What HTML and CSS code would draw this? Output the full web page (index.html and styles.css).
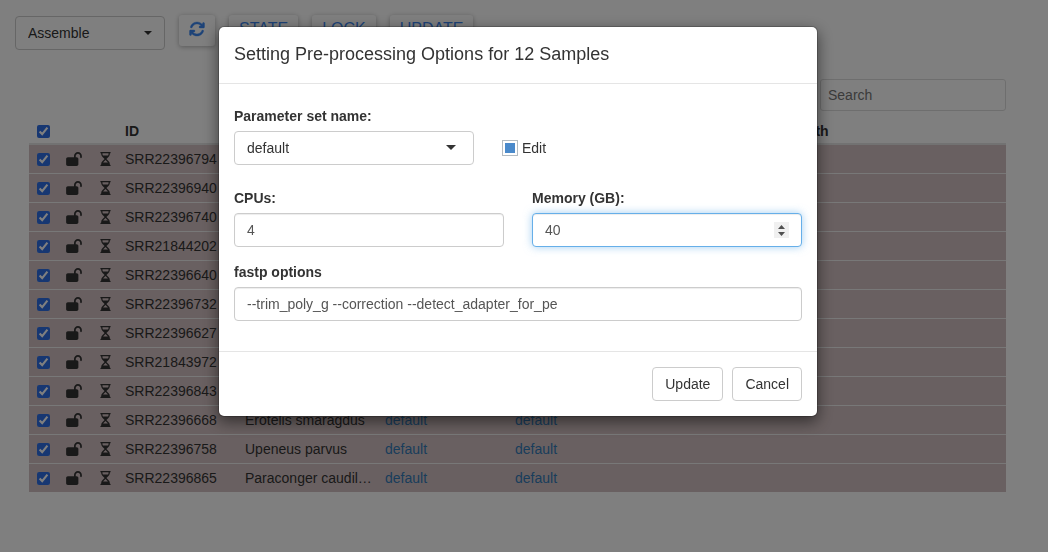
FILE: index.html
```html
<!DOCTYPE html>
<html lang="en">
<head>
<meta charset="utf-8">
<title>Assemble</title>
<link rel="stylesheet" href="styles.css">
</head>
<body>
<svg class="sprite" aria-hidden="true">
  <symbol id="refresh" viewBox="0 0 512 512"><path d="M105.1 202.6c7.7-21.8 20.2-42.3 37.8-59.8c62.5-62.5 163.8-62.5 226.3 0L386.3 160H352c-17.7 0-32 14.3-32 32s14.3 32 32 32H463.9c17.7 0 32-14.3 32-32V80c0-17.7-14.3-32-32-32s-32 14.3-32 32v35.200L414.4 97.6c-87.5-87.5-229.3-87.5-316.8 0C73.2 122 55.6 150.7 44.8 181.4c-5.9 16.7 2.9 34.9 19.5 40.8s34.9-2.9 40.8-19.5zM39 289.3c-5 1.5-9.8 4.2-13.7 8.2c-4 4-6.7 8.8-8.1 14c-.3 1.2-.6 2.5-.8 3.8c-.3 1.7-.4 3.4-.4 5.1V432c0 17.7 14.3 32 32 32s32-14.3 32-32V396.900l17.6 17.5c87.5 87.4 229.3 87.4 316.7 0c24.4-24.4 42.1-53.1 52.9-83.7c5.9-16.7-2.9-34.9-19.5-40.8s-34.9 2.9-40.8 19.5c-7.7 21.8-20.2 42.3-37.8 59.8c-62.5 62.5-163.8 62.5-226.3 0l-.1-.1L125.6 352H160c17.7 0 32-14.3 32-32s-14.3-32-32-32H48.4c-1.6 0-3.2 .1-4.8 .3s-3.1 .5-4.6 1z"/></symbol>
  <symbol id="unlock" viewBox="0 0 576 512"><path d="M352 144c0-44.2 35.8-80 80-80s80 35.8 80 80v48c0 17.7 14.3 32 32 32s32-14.3 32-32V144C576 64.5 511.5 0 432 0S288 64.5 288 144v48H64c-35.3 0-64 28.7-64 64V448c0 35.3 28.7 64 64 64H384c35.3 0 64-28.7 64-64V256c0-35.3-28.7-64-64-64H352V144z"/></symbol>
  <symbol id="hourglass" viewBox="0 0 384 512"><path d="M0 24C0 10.7 10.7 0 24 0H360c13.3 0 24 10.7 24 24s-10.7 24-24 24h-8V67c0 40.3-16 79-44.5 107.5L225.9 256l81.5 81.5C336 366 352 404.7 352 445v19h8c13.3 0 24 10.7 24 24s-10.7 24-24 24H24c-13.3 0-24-10.7-24-24s10.7-24 24-24h8V445c0-40.3 16-79 44.5-107.5L158.1 256 76.5 174.5C48 146 32 107.3 32 67V48H24C10.7 48 0 37.3 0 24zM110.5 371.5c-3.9 3.9-7.5 8.1-10.7 12.5H284.2c-3.2-4.4-6.8-8.6-10.7-12.500L192 289.9l-81.5 81.500zM284.2 128C297 110.4 304 89 304 67V48H80V67c0 22.1 7 43.4 19.8 61H284.2z"/></symbol>
</svg>

<header class="toolbar">
  <span class="picker picker-tool">
    <select class="control" aria-label="Step"><option>Assemble</option></select>
  </span>
  <button class="tool tool-icon" type="button" aria-label="Refresh"><svg class="icon-refresh"><use href="#refresh"/></svg></button>
  <button class="tool" type="button">STATE</button>
  <button class="tool" type="button">LOCK</button>
  <button class="tool" type="button">UPDATE</button>
</header>

<main class="samples">
  <input class="search" type="search" placeholder="Search" aria-label="Search">
  <table class="grid">
    <colgroup><col class="c-tick"><col class="c-lock"><col class="c-state"><col class="c-id"><col class="c-name"><col class="c-opt"><col class="c-opt"><col class="c-gap"><col></colgroup>
    <thead><tr><th><input class="tick" type="checkbox" checked aria-label="Select all"></th><th></th><th></th><th>ID</th><th></th><th></th><th></th><th></th><th>Depth</th></tr></thead>
    <tbody id="rows"></tbody>
  </table>
</main>

<div class="backdrop">
  <form class="modal" role="dialog" aria-labelledby="title">
    <h4 class="modal-title" id="title">Setting Pre-processing Options for 12 Samples</h4>
    <div class="modal-body">
      <div class="field">
        <label class="label" for="set">Parameter set name:</label>
        <div class="set-row">
          <span class="picker picker-set"><select class="control" id="set"><option>default</option></select></span>
          <label class="edit"><input class="edit-box" type="checkbox" checked>Edit</label>
        </div>
      </div>
      <div class="pair">
        <div class="field"><label class="label" for="cpus">CPUs:</label><input class="control" id="cpus" type="number" value="4"></div>
        <div class="field"><label class="label" for="mem">Memory (GB):</label><input class="control is-active" id="mem" type="number" value="40"></div>
      </div>
      <div class="field"><label class="label" for="fastp">fastp options</label><input class="control" id="fastp" type="text" spellcheck="false" value="--trim_poly_g --correction --detect_adapter_for_pe"></div>
    </div>
    <div class="modal-footer">
      <button class="btn" type="button">Update</button>
      <button class="btn" type="button">Cancel</button>
    </div>
  </form>
</div>
<script src="rows.js"></script>
</body>
</html>
```
FILE: styles.css
```css
* { box-sizing: border-box; }
body { margin: 0; color: #333; background: #fff; font: 14px/20px "Liberation Sans", Arial, sans-serif; }
input, select, button { font: inherit; color: inherit; margin: 0; }
.sprite { display: none; }

.toolbar { display: flex; align-items: flex-start; gap: 14px; padding: 15px 15px 0; height: 50px; }
.tool { height: 31px; padding: 0 10px 3px; border: 0; border-radius: 3px; background: #fff; color: #3a86f0; font-size: 16px; line-height: 28px; box-shadow: 0 1px 5px rgba(0, 0, 0, .3); }
.tool-icon { display: flex; align-items: center; }
.icon-refresh { width: 16px; height: 16px; fill: currentColor; stroke: currentColor; stroke-width: 12px; }

.control { display: block; width: 100%; height: 34px; padding: 6px 12px; border: 1px solid #ccc; border-radius: 4px; background: #fff; color: #555; box-shadow: inset 0 1px 1px rgba(0, 0, 0, .075); outline: 0; }
.picker { position: relative; display: block; }
.picker .control { appearance: none; color: #333; box-shadow: none; }
.picker::after { content: ""; position: absolute; top: 15px; right: 13px; border: 4px solid transparent; border-top-color: #333; border-bottom: 0; pointer-events: none; }
.picker-tool { width: 150px; margin-top: 1px; }
.picker-set { width: 240px; }
.picker-set::after { top: 14px; right: 18px; border-width: 5px 5px 0; }

.samples { display: flex; flex-direction: column; padding: 29px 42px 60px 29px; }
.search { align-self: flex-end; width: 186px; height: 32px; margin-bottom: 8px; padding: 5px 7px; border: 1px solid #ddd; border-radius: 3px; background: #fff; }
.search::placeholder { color: #767676; }
.grid { width: 100%; table-layout: fixed; border-collapse: separate; border-spacing: 0; }
.grid th { height: 26px; padding: 2px 5px; border-bottom: 2px solid #e4e4e4; text-align: left; }
.grid td { height: 29px; padding: 4px 8px 4px 5px; border-top: 1px solid #f0f0f0; background: #d3c1c2; overflow: hidden; text-overflow: ellipsis; white-space: nowrap; }
.grid tbody tr:first-child td { height: 28px; border-top: 0; }
.grid th:first-child, .grid td:first-child { padding-left: 8px; }
.grid td:nth-child(2) { padding-left: 7px; }
.grid td:nth-child(3) { padding-left: 11px; }
.c-tick, .c-lock { width: 30px; }
.c-state { width: 31px; }
.c-id { width: 120px; }
.c-name { width: 140px; }
.c-opt { width: 130px; }
.c-gap { width: 144px; }
.tick { display: block; width: 13px; height: 13px; accent-color: #2f6fe4; }
.icon-lock, .icon-glass { display: block; height: 14px; fill: currentColor; }
.icon-lock { width: 16px; }
.icon-glass { width: 11px; }
.link { color: #337ab7; text-decoration: none; }

.backdrop { position: fixed; inset: 0; padding: 26px 12px 0 0; background: rgba(0, 0, 0, .5); }
.modal { max-width: 600px; margin: 0 auto; border: 1px solid rgba(0, 0, 0, .2); border-radius: 6px; background: #fff; background-clip: padding-box; box-shadow: 0 5px 15px rgba(0, 0, 0, .5); }
.modal-title { margin: 0; padding: 14px 15px 16px; border-bottom: 1px solid #e5e5e5; font-size: 18px; font-weight: 400; line-height: 26px; }
.modal-body { display: grid; gap: 15px; padding: 22px 15px 30px; }
.label { display: block; margin-bottom: 5px; font-weight: 700; }
.set-row { display: flex; align-items: center; gap: 28px; }
.edit { display: flex; align-items: center; gap: 4px; }
.edit-box { appearance: none; width: 16px; height: 16px; border: 1px solid #b4bcc2; background: #fff; padding: 2px; }
.edit-box:checked { background: #4a8acb content-box; }
.pair { display: grid; grid-template-columns: 1fr 1fr; gap: 28px; margin-top: 8px; }
.is-active { border-color: #66afe9; box-shadow: inset 0 1px 1px rgba(0, 0, 0, .075), 0 0 8px rgba(102, 175, 233, .6); }
.is-active::-webkit-inner-spin-button { appearance: none; width: 15px; height: 16px; opacity: 1; background: #f0f0f0 url("data:image/svg+xml,%3Csvg xmlns='http://www.w3.org/2000/svg' viewBox='0 0 15 16'%3E%3Cpath d='M4 7l3.500-4L11 7zM4 10l3.500 4L11 10z' fill='%23505050'/%3E%3C/svg%3E") center / 15px 16px no-repeat; }
.modal-footer { display: flex; justify-content: flex-end; gap: 9px; padding: 15px; border-top: 1px solid #e5e5e5; }
.btn { height: 34px; padding: 6px 12px; border: 1px solid #ccc; border-radius: 4px; background: #fff; }
```
FILE: rows.js
```js
const samples = [
  ["SRR22396794"], ["SRR22396940"], ["SRR22396740"],
  ["SRR21844202"], ["SRR22396640"], ["SRR22396732"],
  ["SRR22396627"], ["SRR21843972"], ["SRR22396843"],
  ["SRR22396668", "Erotelis smaragdus", "default"],
  ["SRR22396758", "Upeneus parvus", "default"],
  ["SRR22396865", "Paraconger caudilimbatus", "default"]
];
const link = text => text ? `<a class="link" href="#">${text}</a>` : "";
document.getElementById("rows").innerHTML = samples.map(([id, name = "", set]) => `<tr>
  <td><input class="tick" type="checkbox" checked aria-label="Select ${id}"></td>
  <td><svg class="icon-lock"><use href="#unlock"/></svg></td>
  <td><svg class="icon-glass"><use href="#hourglass"/></svg></td>
  <td>${id}</td><td>${name}</td>
  <td>${link(set)}</td><td>${link(set)}</td>
  <td></td><td></td></tr>`).join("");
```
